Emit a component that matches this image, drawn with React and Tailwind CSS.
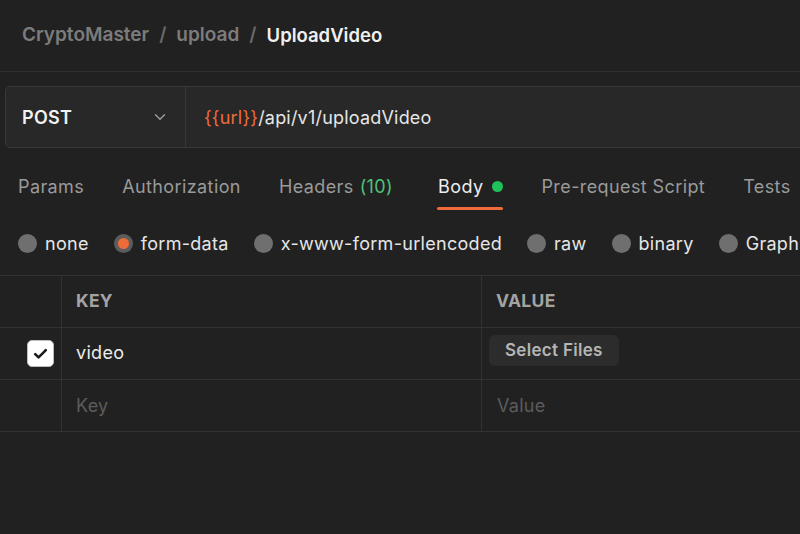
import React from 'react';
import { ChevronDown } from 'lucide-react';

const tabs = [
  { label: 'Params' },
  { label: 'Authorization' },
  { label: 'Headers', count: '(10)' },
  { label: 'Body', active: true, dot: true },
  { label: 'Pre-request Script' },
  { label: 'Tests' },
];

const bodyTypes = ['none', 'form-data', 'x-www-form-urlencoded', 'raw', 'binary', 'GraphQL'];

const App = () => {
  return (
    <div
      className="w-[800px] h-[534px] overflow-hidden bg-[#212121] text-white"
      style={{ fontFamily: 'Inter, "Noto Sans", sans-serif' }}
    >
      {/* Breadcrumb */}
      <div className="h-[72px] flex items-center pl-[22px] text-[19px] font-semibold border-b border-[#2f2f2f]">
        <span className="text-[#7c7c7c]">CryptoMaster</span>
        <span className="text-[#6a6a6a] mx-[10px]">/</span>
        <span className="text-[#7c7c7c]">upload</span>
        <span className="text-[#6a6a6a] mx-[10px]">/</span>
        <span className="text-[#f0f0f0] text-[18.5px]">UploadVideo</span>
      </div>

      {/* URL bar */}
      <div className="pt-[14px] pl-[5px]">
        <div className="flex h-[62px] w-[820px] rounded-[5px] border border-[#383838] bg-[#282828]">
          <div className="w-[180px] flex items-center justify-between pl-[16px] pr-[16px] border-r border-[#383838]">
            <span className="text-[18px] font-semibold text-[#f2f2f2] tracking-[0.3px]">POST</span>
            <ChevronDown className="w-[18px] h-[18px] text-[#a0a0a0]" strokeWidth={1.75} />
          </div>
          <div className="flex items-center pl-[18px] text-[18px] tracking-[0.2px] text-[#e6e6e6]">
            <span className="text-[#f06b3a]">{'{{url}}'}</span>
            <span>/api/v1/uploadVideo</span>
          </div>
        </div>
      </div>

      {/* Tabs */}
      <div className="flex gap-[38px] pl-[18px] mt-[25px] h-[50px] whitespace-nowrap text-[18px] tracking-[0.4px]">
        {tabs.map((t) => (
          <div key={t.label} className={`relative flex items-start ${t.active ? 'ml-[7px]' : ''}`}>
            <span className={t.active ? 'text-[#ededed]' : 'text-[#9a9a9a]'}>{t.label}</span>
            {t.count && <span className="ml-[6px] text-[#4ec27a]">{t.count}</span>}
            {t.dot && <span className="ml-[9px] mt-[8px] w-[11px] h-[11px] rounded-full bg-[#1fc15a]" />}
            {t.active && (
              <span className="absolute left-[-1px] right-0 top-[34px] h-[3px] bg-[#f06b3a] rounded-sm" />
            )}
          </div>
        ))}
      </div>

      {/* Body type radios */}
      <div className="flex items-center gap-[25px] pl-[18px] h-[40px] whitespace-nowrap text-[18px] tracking-[0.3px] text-[#e6e6e6]">
        {bodyTypes.map((b) => (
          <div key={b} className="flex items-center gap-[8px]">
            {b === 'form-data' ? (
              <span className="w-[19px] h-[19px] rounded-full bg-[#5c5c5c] flex items-center justify-center">
                <span className="w-[11px] h-[11px] rounded-full bg-[#f06b3a]" />
              </span>
            ) : (
              <span className="w-[19px] h-[19px] rounded-full bg-[#6f6f6f]" />
            )}
            <span>{b}</span>
          </div>
        ))}
      </div>

      {/* Table */}
      <div className="mt-[12px] border-t border-[#323232] text-[18px] tracking-[0.3px]">
        <div className="grid grid-cols-[62px_420px_1fr] h-[52px] border-b border-[#323232]">
          <div className="border-r border-[#323232]" />
          <div className="border-r border-[#323232] flex items-center pl-[14px] text-[17.5px] font-bold text-[#a3a3a3]">KEY</div>
          <div className="flex items-center pl-[14px] text-[17.5px] font-bold text-[#a3a3a3]">VALUE</div>
        </div>
        <div className="grid grid-cols-[62px_420px_1fr] h-[52px] border-b border-[#323232]">
          <div className="border-r border-[#323232] flex items-center justify-end pr-[7px]">
            <span className="w-[27px] h-[27px] rounded-[5px] bg-white border border-[#bdbdbd] flex items-center justify-center">
              <svg viewBox="0 0 16 16" className="w-[17px] h-[17px]" fill="none" stroke="#1a1a1a" strokeWidth="2.4" strokeLinecap="round" strokeLinejoin="round">
                <path d="M3 8.5l3.2 3.2L13 4.8" />
              </svg>
            </span>
          </div>
          <div className="border-r border-[#323232] flex items-center pl-[14px] pb-[2px] text-[#ededed]">video</div>
          <div className="flex items-center pl-[7px] pb-[6px]">
            <button className="h-[31px] px-[16px] rounded-[6px] bg-[#2c2c2c] text-[17px] font-semibold text-[#b5b5b5] tracking-[0.3px]">
              Select Files
            </button>
          </div>
        </div>
        <div className="grid grid-cols-[62px_420px_1fr] h-[52px] border-b border-[#323232]">
          <div className="border-r border-[#323232]" />
          <div className="border-r border-[#323232] flex items-center pl-[14px] text-[#5c5c5c]">Key</div>
          <div className="flex items-center pl-[15px] text-[#5c5c5c]">Value</div>
        </div>
      </div>
    </div>
  );
};

export default App;
